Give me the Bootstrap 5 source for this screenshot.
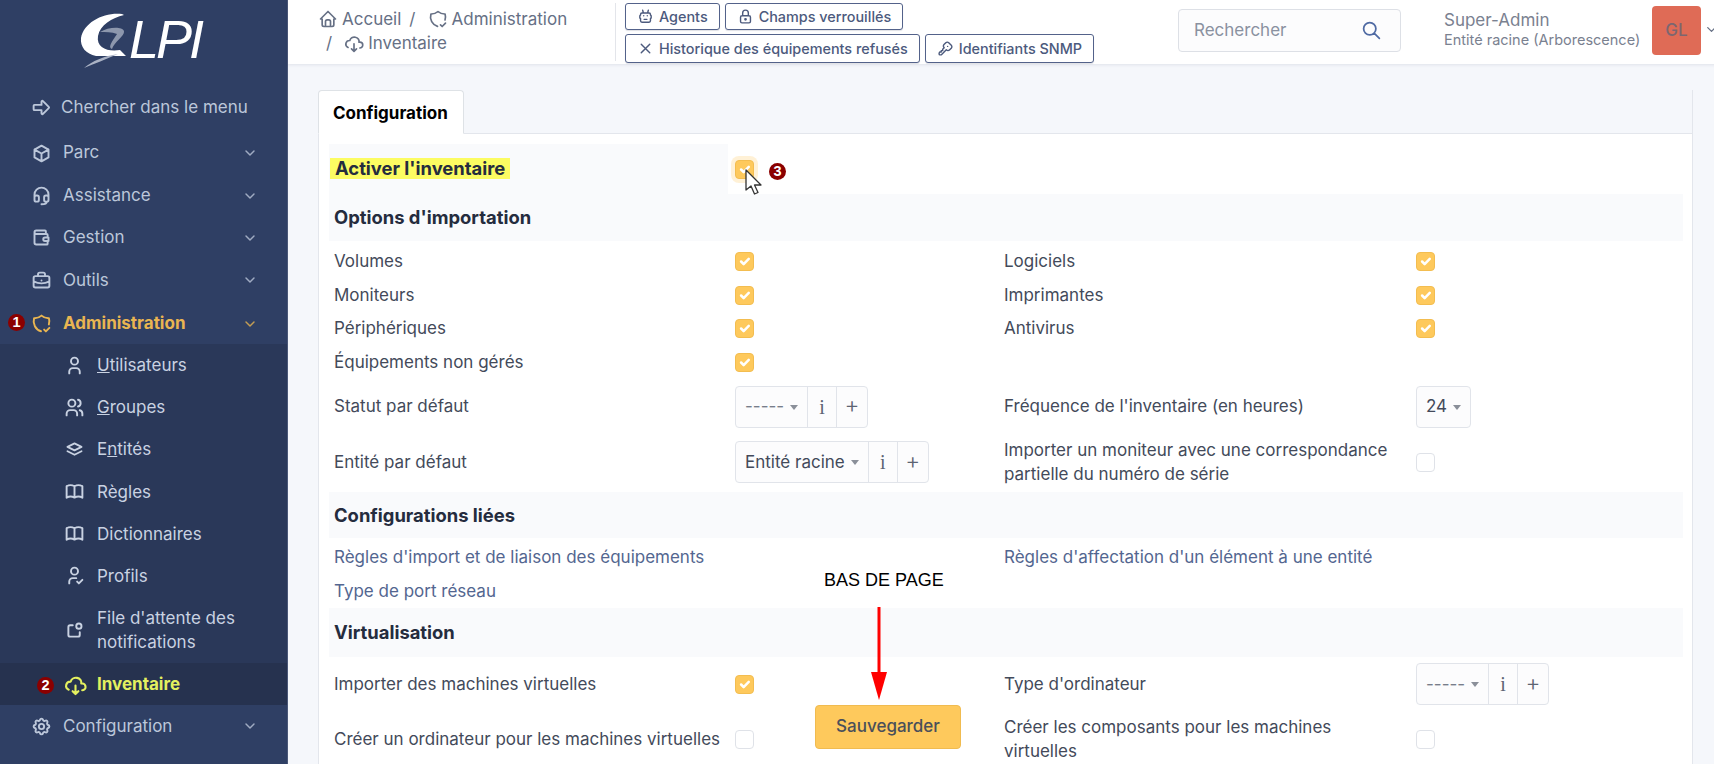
<!DOCTYPE html>
<html lang="fr">
<head>
    <meta charset="UTF-8">
    <title>Inventaire - GLPI</title>
    <link href="https://cdn.jsdelivr.net/npm/bootstrap@5.3.0/dist/css/bootstrap.min.css" rel="stylesheet">
    <style>
        html, body { height: 100%; overflow: hidden; }
        body { font-family: Inter, "Liberation Sans", sans-serif; font-size: 17px; color: #434a5a; background: #f5f7fb; }
        .app-root { position: relative; width: 1714px; height: 764px; overflow: hidden; }
        .ico { width: 1em; height: 1em; fill: none; stroke: currentColor; stroke-width: 2; stroke-linecap: round; stroke-linejoin: round; flex-shrink: 0; }

        /* sidebar */
        .side { width: 288px; background: #2f3f64; color: #bcc7da; border-right: 1px solid #4b5878; flex-shrink: 0; }
        .side .ico { stroke-width: 2.2; }
        .side-logo { height: 86px; color: #fff; padding-left: 80px; padding-top: 12px; }
        .logo-txt { font-family: "Liberation Sans", sans-serif; font-style: italic; font-size: 54px; line-height: 1; letter-spacing: -3px; margin-left: -1px; }
        .side-search { height: 43px; padding-left: 31px; gap: 9px; margin-bottom: 3px; }
        .side-search .ico { font-size: 21px; }
        .side-item { height: 42.4px; padding-left: 31px; padding-right: 29px; gap: 11px; }
        .side-item > .ico:first-child { font-size: 21px; }
        .side-item .chev { font-size: 16px; margin-left: auto; opacity: .8; }
        .side-item.is-open { color: #e9b551; font-weight: 700; padding-top: 2px; }
        .side-sub { background: #2a3859; color: #c9d2e2; }
        .sub-item { min-height: 42.2px; padding-left: 64px; padding-right: 40px; gap: 12px; line-height: 24px; }
        .sub-item .ico { font-size: 21px; }
        .sub-item.is-file { padding-top: 9px; padding-bottom: 9px; }
        .sub-item.is-current { background: #26324f; color: #e4f05f; font-weight: 700; }
        .sub-item.is-current .ico { font-size: 23px; margin-right: -2px; }

        /* top bar */
        .topbar { height: 64px; background: #fff; box-shadow: 0 1px 3px rgba(40, 50, 80, .1); padding-left: 30px; color: #667085; }
        .crumb { width: 280px; padding-top: 7px; flex-shrink: 0; }
        .crumb .breadcrumb { margin: 0; line-height: 24px; font-size: 17px; }
        .crumb .breadcrumb-item { color: #667085; display: flex; align-items: center; gap: 4px; }
        .crumb .breadcrumb-item::before { color: #667085; }
        .crumb .ico { font-size: 20px; }
        .top-actions { width: 540px; margin-left: 17px; border-left: 1px solid #e3e5ea; height: 58px; margin-top: 3px; padding-left: 9px; flex-shrink: 0; gap: 2px 5px; align-content: flex-start; }
        .btn-act { --bs-btn-padding-y: 0; --bs-btn-padding-x: 11px; --bs-btn-font-size: 14.4px; --bs-btn-border-radius: 3px; --bs-btn-color: #4c5a7d; --bs-btn-border-color: #53628a; height: 27px; border-width: 1px; background: #fff; display: inline-flex; align-items: center; gap: 5px; font-weight: 500; box-shadow: 0 1px 1px rgba(40, 50, 80, .15); }
        .btn-act .ico { font-size: 17px; }
        .btn-act.tall { height: 29px; }
        .top-search { width: 223px; height: 43px; margin-left: 23px; margin-top: 9px; border: 1px solid #dde0e6; border-radius: 4px; background: #fcfcfd; padding: 0 18px 0 15px; color: #8a91a0; flex-shrink: 0; }
        .top-search .ico { color: #4f6aa3; font-size: 21px; margin-left: auto; }
        .top-user { margin-left: 43px; line-height: 1.2; color: #7a8190; padding-top: 10px; width: 208px; flex-shrink: 0; white-space: nowrap; }
        .top-user small { font-size: 14.5px; display: block; margin-top: 1px; }
        .avatar-gl { width: 49px; height: 49px; border-radius: 4px; background: #df6b56; color: #7c6670; font-weight: 500; margin-top: 6px; flex-shrink: 0; }
        .top-chev { font-size: 15px; margin-top: 22px; margin-left: 3px; flex-shrink: 0; }

        /* content */
        .page-body { padding: 26px 26px 0 30px; }
        .tab-strip { border-right: 1px solid #e3e6ec; --bs-nav-tabs-border-color: #e3e6ec; height: 44px; }
        .tab-strip .nav-link { height: 44px; padding: 0 14px; line-height: 44px; width: 146px; color: #252c3e; font-weight: 700; font-size: 17px; border-radius: 4px 4px 0 0; background: #fff; border-color: #e9ecf1 #e9ecf1 #fff; }
        .form-box { background: #fff; border: 1px solid #e3e6ec; border-top: 0; padding: 10px 9px 0 10px; border-radius: 0; height: 640px; }
        .cfg-row { display: grid; grid-template-columns: 399px 269px 412px 270px; align-items: center; }
        .cfg-row > div { padding-left: 7px; }
        .cfg-row > div:nth-child(4n+1) { padding-left: 5px; }
        .row-s { height: 33.6px; }
        .row-m { height: 55.4px; }
        .row-l { height: 50px; }
        .row-xl { height: 60px; }
        .row-first { height: 50px; }
        .row-first > div:first-child { background: #f9fafc; height: 50px; padding-bottom: 2px; display: flex; align-items: center; }
        .band { background: #f9fafc; height: 47px; padding-left: 5px; padding-top: 1px; font-weight: 700; font-size: 18.4px; color: #252c3e; display: flex; align-items: center; }
        .band.gap-b { margin-bottom: 4px; }
        .band.gap-a { margin-top: 2px; margin-bottom: 3px; height: 46px; }
        .band.band-lg { height: 49px; margin-bottom: 2px; padding-top: 0; }
        .hl-yellow { background: #fcfc62; font-weight: 700; font-size: 18.4px; color: #252c3e; padding: 0 5px; margin-left: -4px; line-height: 21px; }
        .cfg-link { color: #536690; text-decoration: none; }
        .lbl-wrap { line-height: 24px; }
        .form-check-input.chk { width: 19px; height: 19px; margin: 0; border-radius: 4px; border-color: #dfe2e8; display: block; }
        .form-check-input.chk:checked { background-color: #fec95c; border-color: #f3bd50; }
        .chk.chk-focus { box-shadow: 0 0 0 4px rgba(254, 201, 92, .25); }
        .sel-grp { height: 42px; border: 1px solid #e1e4ea; border-radius: 4px; background: #fcfcfd; }
        .sel-grp > span { padding: 0 9px; border-right: 1px solid #e1e4ea; }
        .sel-grp > span:last-child { border-right: 0; }
        .sel-val { gap: 6px; }
        .sel-val::after { content: ""; border: 4px solid transparent; border-top: 5px solid #8a8f99; border-bottom: 0; }
        .sel-dash { color: #777d8a; }
        .sel-info { font-family: "Liberation Serif", serif; font-size: 20px; width: 29px; justify-content: center; color: #5d6473; padding: 0 !important; }
        .sel-plus { font-size: 23px; font-weight: 300; width: 30px; justify-content: center; color: #5d6473; padding: 0 0 3px !important; }

        /* overlays */
        .mark-num { position: absolute; width: 17px; height: 17px; border-radius: 50%; background: #8b0000; color: #fff; font-size: 14.5px; line-height: 17px; font-family: "Liberation Sans", sans-serif; font-weight: 700; text-align: center; }
        .btn-save { position: absolute; left: 815px; top: 705px; width: 146px; height: 44px; --bs-btn-bg: #fec95c; --bs-btn-border-color: #f0bb50; --bs-btn-color: #4a4f5a; --bs-btn-font-size: 17px; --bs-btn-border-radius: 4px; font-weight: 500; }
        .note-txt { position: absolute; left: 824px; top: 570px; font-family: "Liberation Sans", sans-serif; font-size: 18px; color: #000; line-height: 20px; }
        .note-arrow { position: absolute; left: 870px; top: 607px; width: 18px; height: 93px; }
        .cursor-ptr { position: absolute; left: 744px; top: 169px; width: 18px; height: 27px; }
    </style>
</head>
<body>
<svg width="0" height="0" class="d-none">
    <symbol id="i-arrow" viewBox="0 0 24 24"><path d="M4 9h8v-3.586a1 1 0 0 1 1.707 -.707l6.586 6.586a1 1 0 0 1 0 1.414l-6.586 6.586a1 1 0 0 1 -1.707 -.707v-3.586h-8a1 1 0 0 1 -1 -1v-4a1 1 0 0 1 1 -1z"/></symbol>
    <symbol id="i-box" viewBox="0 0 24 24"><path d="M12 3l8 4.500v9l-8 4.500l-8 -4.500v-9z M12 12l8 -4.500 M12 12v9 M12 12l-8 -4.500"/></symbol>
    <symbol id="i-headset" viewBox="0 0 24 24"><path d="M4 14v-3a8 8 0 1 1 16 0v3 M18 19c0 1.657 -2.686 3 -6 3 M4 14a2 2 0 0 1 2 -2h1a2 2 0 0 1 2 2v3a2 2 0 0 1 -2 2h-1a2 2 0 0 1 -2 -2v-3z M15 14a2 2 0 0 1 2 -2h1a2 2 0 0 1 2 2v3a2 2 0 0 1 -2 2h-1a2 2 0 0 1 -2 -2v-3z"/></symbol>
    <symbol id="i-wallet" viewBox="0 0 24 24"><path d="M17 8v-3a1 1 0 0 0 -1 -1h-10a2 2 0 0 0 0 4h12a1 1 0 0 1 1 1v3m0 4v3a1 1 0 0 1 -1 1h-12a2 2 0 0 1 -2 -2v-12 M20 12v4h-4a2 2 0 0 1 0 -4h4"/></symbol>
    <symbol id="i-case" viewBox="0 0 24 24"><path d="M3 9a2 2 0 0 1 2 -2h14a2 2 0 0 1 2 2v9a2 2 0 0 1 -2 2h-14a2 2 0 0 1 -2 -2z M8 7v-2a2 2 0 0 1 2 -2h4a2 2 0 0 1 2 2v2 M12 12v.01 M3 13a20 20 0 0 0 18 0"/></symbol>
    <symbol id="i-shield" viewBox="0 0 24 24"><path d="M11.46 20.846a12 12 0 0 1 -7.96 -14.846a12 12 0 0 0 8.500 -3a12 12 0 0 0 8.500 3a12 12 0 0 1 -.09 7.06 M15 19l2 2l4 -4"/></symbol>
    <symbol id="i-user" viewBox="0 0 24 24"><path d="M8 7a4 4 0 1 0 8 0a4 4 0 0 0 -8 0 M6 21v-2a4 4 0 0 1 4 -4h4a4 4 0 0 1 4 4v2"/></symbol>
    <symbol id="i-users" viewBox="0 0 24 24"><path d="M5 7a4 4 0 1 0 8 0a4 4 0 1 0 -8 0 M3 21v-2a4 4 0 0 1 4 -4h4a4 4 0 0 1 4 4v2 M16 3.13a4 4 0 0 1 0 7.75 M21 21v-2a4 4 0 0 0 -3 -3.85"/></symbol>
    <symbol id="i-stack" viewBox="0 0 24 24"><path d="M12 5l-8 4l8 4l8 -4z M4 14l8 4l8 -4"/></symbol>
    <symbol id="i-book" viewBox="0 0 24 24"><path d="M3 19a9 9 0 0 1 9 0a9 9 0 0 1 9 0 M3 6a9 9 0 0 1 9 0a9 9 0 0 1 9 0 M3 6v13 M12 6v13 M21 6v13"/></symbol>
    <symbol id="i-ucheck" viewBox="0 0 24 24"><path d="M8 7a4 4 0 1 0 8 0a4 4 0 0 0 -8 0 M6 21v-2a4 4 0 0 1 4 -4h4 M15 19l2 2l4 -4"/></symbol>
    <symbol id="i-notif" viewBox="0 0 24 24"><path d="M10 6h-3a2 2 0 0 0 -2 2v9a2 2 0 0 0 2 2h9a2 2 0 0 0 2 -2v-3 M14 7a3 3 0 1 0 6 0a3 3 0 1 0 -6 0"/></symbol>
    <symbol id="i-cloud" viewBox="0 0 24 24"><path d="M19 18a3.500 3.500 0 0 0 0 -7h-1a5 4.500 0 0 0 -11 -2a4.600 4.400 0 0 0 -2.100 8.400 M12 13v9 M9 19l3 3l3 -3"/></symbol>
    <symbol id="i-gear" viewBox="0 0 24 24"><path d="M10.325 4.317c.426 -1.756 2.924 -1.756 3.35 0a1.724 1.724 0 0 0 2.573 1.066c1.543 -.94 3.31 .826 2.37 2.37a1.724 1.724 0 0 0 1.065 2.572c1.756 .426 1.756 2.924 0 3.35a1.724 1.724 0 0 0 -1.066 2.573c.94 1.543 -.826 3.31 -2.37 2.37a1.724 1.724 0 0 0 -2.572 1.065c-.426 1.756 -2.924 1.756 -3.35 0a1.724 1.724 0 0 0 -2.573 -1.066c-1.543 .94 -3.31 -.826 -2.37 -2.37a1.724 1.724 0 0 0 -1.065 -2.572c-1.756 -.426 -1.756 -2.924 0 -3.35a1.724 1.724 0 0 0 1.066 -2.573c-.94 -1.543 .826 -3.31 2.37 -2.37c1 .608 2.296 .07 2.572 -1.065z M9 12a3 3 0 1 0 6 0a3 3 0 0 0 -6 0"/></symbol>
    <symbol id="i-chev" viewBox="0 0 24 24"><path d="M6 9l6 6l6 -6"/></symbol>
    <symbol id="i-home" viewBox="0 0 24 24"><path d="M5 12h-2l9 -9l9 9h-2 M5 12v7a2 2 0 0 0 2 2h10a2 2 0 0 0 2 -2v-7 M9 21v-6a2 2 0 0 1 2 -2h2a2 2 0 0 1 2 2v6"/></symbol>
    <symbol id="i-robot" viewBox="0 0 24 24"><path d="M7 7h10a2 2 0 0 1 2 2v1l1 1v3l-1 1v3a2 2 0 0 1 -2 2h-10a2 2 0 0 1 -2 -2v-3l-1 -1v-3l1 -1v-1a2 2 0 0 1 2 -2z M10 16h4 M9.500 11v.01 M14.500 11v.01 M9 7l-1 -4 M15 7l1 -4"/></symbol>
    <symbol id="i-lock" viewBox="0 0 24 24"><path d="M5 13a2 2 0 0 1 2 -2h10a2 2 0 0 1 2 2v6a2 2 0 0 1 -2 2h-10a2 2 0 0 1 -2 -2z M11 16a1 1 0 1 0 2 0a1 1 0 0 0 -2 0 M8 11v-4a4 4 0 1 1 8 0v4"/></symbol>
    <symbol id="i-x" viewBox="0 0 24 24"><path d="M18 6l-12 12 M6 6l12 12"/></symbol>
    <symbol id="i-key" viewBox="0 0 24 24"><path d="M16.555 3.843l3.602 3.602a2.877 2.877 0 0 1 0 4.069l-2.643 2.643a2.877 2.877 0 0 1 -4.069 0l-.301 -.301l-6.558 6.558a2 2 0 0 1 -1.239 .578l-.175 .008h-1.172a1 1 0 0 1 -.993 -.883l-.007 -.117v-1.172a2 2 0 0 1 .467 -1.284l.119 -.13l.414 -.414h2v-2h2v-2l2.144 -2.144l-.301 -.301a2.877 2.877 0 0 1 0 -4.069l2.643 -2.643a2.877 2.877 0 0 1 4.069 0z M15 9h.01"/></symbol>
    <symbol id="i-search" viewBox="0 0 24 24"><path d="M3 10a7 7 0 1 0 14 0a7 7 0 1 0 -14 0 M21 21l-6 -6"/></symbol>
</svg>

<div class="app-root d-flex">
    <aside class="side">
        <div class="side-logo d-flex align-items-start">
            <svg width="50" height="56" viewBox="0 0 50 56">
                <path fill="#fff" d="M42 2C24 0 4 10 1 26C0 35 6 42 16 44L46 44L40 38C28 40 16 36 18 24C20 13 32 6 44 3z"/>
                <path fill="#8d97ad" d="M20 20C28 15 42 14 44 19C45 24 34 30 32 37C27 35 34 27 37 22C32 20 25 20 20 20z"/>
                <path fill="#aab2c4" d="M4 56C12 49 24 44 38 42C26 47 14 52 4 56z"/>
            </svg>
            <span class="logo-txt">LPI</span>
        </div>
        <div class="side-search d-flex align-items-center"><svg class="ico"><use href="#i-arrow"/></svg>Chercher dans le menu</div>
        <div class="side-item d-flex align-items-center"><svg class="ico"><use href="#i-box"/></svg>Parc<svg class="ico chev"><use href="#i-chev"/></svg></div>
        <div class="side-item d-flex align-items-center"><svg class="ico"><use href="#i-headset"/></svg>Assistance<svg class="ico chev"><use href="#i-chev"/></svg></div>
        <div class="side-item d-flex align-items-center"><svg class="ico"><use href="#i-wallet"/></svg>Gestion<svg class="ico chev"><use href="#i-chev"/></svg></div>
        <div class="side-item d-flex align-items-center"><svg class="ico"><use href="#i-case"/></svg>Outils<svg class="ico chev"><use href="#i-chev"/></svg></div>
        <div class="side-item is-open d-flex align-items-center"><svg class="ico"><use href="#i-shield"/></svg>Administration<svg class="ico chev"><use href="#i-chev"/></svg></div>
        <div class="side-sub">
            <div class="sub-item d-flex align-items-center"><svg class="ico"><use href="#i-user"/></svg><span><u>U</u>tilisateurs</span></div>
            <div class="sub-item d-flex align-items-center"><svg class="ico"><use href="#i-users"/></svg><span><u>G</u>roupes</span></div>
            <div class="sub-item d-flex align-items-center"><svg class="ico"><use href="#i-stack"/></svg><span>E<u>n</u>tités</span></div>
            <div class="sub-item d-flex align-items-center"><svg class="ico"><use href="#i-book"/></svg><span>Règles</span></div>
            <div class="sub-item d-flex align-items-center"><svg class="ico"><use href="#i-book"/></svg><span>Dictionnaires</span></div>
            <div class="sub-item d-flex align-items-center"><svg class="ico"><use href="#i-ucheck"/></svg><span>Profils</span></div>
            <div class="sub-item is-file d-flex align-items-center"><svg class="ico"><use href="#i-notif"/></svg><span>File d'attente des notifications</span></div>
            <div class="sub-item is-current d-flex align-items-center"><svg class="ico"><use href="#i-cloud"/></svg><span>Inventaire</span></div>
        </div>
        <div class="side-item d-flex align-items-center"><svg class="ico"><use href="#i-gear"/></svg>Configuration<svg class="ico chev"><use href="#i-chev"/></svg></div>
    </aside>

    <main class="flex-grow-1">
        <header class="topbar d-flex">
            <nav class="crumb">
                <ol class="breadcrumb">
                    <li class="breadcrumb-item"><svg class="ico"><use href="#i-home"/></svg>Accueil</li>
                    <li class="breadcrumb-item"><svg class="ico"><use href="#i-shield"/></svg>Administration</li>
                    <li class="breadcrumb-item"><svg class="ico"><use href="#i-cloud"/></svg>Inventaire</li>
                </ol>
            </nav>
            <div class="top-actions d-flex flex-wrap">
                <button class="btn btn-act"><svg class="ico"><use href="#i-robot"/></svg>Agents</button>
                <button class="btn btn-act"><svg class="ico"><use href="#i-lock"/></svg>Champs verrouillés</button>
                <div class="w-100"></div>
                <button class="btn btn-act tall"><svg class="ico"><use href="#i-x"/></svg>Historique des équipements refusés</button>
                <button class="btn btn-act tall"><svg class="ico"><use href="#i-key"/></svg>Identifiants SNMP</button>
            </div>
            <div class="top-search d-flex align-items-center">Rechercher<svg class="ico"><use href="#i-search"/></svg></div>
            <div class="top-user">Super-Admin<small>Entité racine (Arborescence)</small></div>
            <div class="avatar-gl d-flex align-items-center justify-content-center">GL</div>
            <svg class="ico top-chev"><use href="#i-chev"/></svg>
        </header>

        <div class="page-body">
            <ul class="nav nav-tabs tab-strip">
                <li class="nav-item"><a class="nav-link active" href="#">Configuration</a></li>
            </ul>
            <div class="form-box">
                <div class="cfg-row row-first">
                    <div><span class="hl-yellow">Activer l'inventaire</span></div>
                    <div><input class="form-check-input chk chk-focus" type="checkbox" checked></div>
                </div>
                <div class="band gap-b">Options d'importation</div>
                <div class="cfg-row row-s">
                    <div>Volumes</div><div><input class="form-check-input chk" type="checkbox" checked></div>
                    <div>Logiciels</div><div><input class="form-check-input chk" type="checkbox" checked></div>
                </div>
                <div class="cfg-row row-s">
                    <div>Moniteurs</div><div><input class="form-check-input chk" type="checkbox" checked></div>
                    <div>Imprimantes</div><div><input class="form-check-input chk" type="checkbox" checked></div>
                </div>
                <div class="cfg-row row-s">
                    <div>Périphériques</div><div><input class="form-check-input chk" type="checkbox" checked></div>
                    <div>Antivirus</div><div><input class="form-check-input chk" type="checkbox" checked></div>
                </div>
                <div class="cfg-row row-s">
                    <div>Équipements non gérés</div><div><input class="form-check-input chk" type="checkbox" checked></div>
                    <div></div><div></div>
                </div>
                <div class="cfg-row row-m">
                    <div>Statut par défaut</div>
                    <div><div class="sel-grp d-inline-flex">
                        <span class="sel-val sel-dash d-flex align-items-center">-----</span><span class="sel-info d-flex align-items-center">i</span><span class="sel-plus d-flex align-items-center">+</span>
                    </div></div>
                    <div>Fréquence de l'inventaire (en heures)</div>
                    <div><div class="sel-grp d-inline-flex">
                        <span class="sel-val d-flex align-items-center">24</span>
                    </div></div>
                </div>
                <div class="cfg-row row-m">
                    <div>Entité par défaut</div>
                    <div><div class="sel-grp d-inline-flex">
                        <span class="sel-val d-flex align-items-center">Entité racine</span><span class="sel-info d-flex align-items-center">i</span><span class="sel-plus d-flex align-items-center">+</span>
                    </div></div>
                    <div class="lbl-wrap">Importer un moniteur avec une correspondance partielle du numéro de série</div>
                    <div><input class="form-check-input chk" type="checkbox"></div>
                </div>
                <div class="band gap-a">Configurations liées</div>
                <div class="cfg-row row-s">
                    <div class="text-nowrap"><a class="cfg-link" href="#">Règles d'import et de liaison des équipements</a></div><div></div>
                    <div class="text-nowrap"><a class="cfg-link" href="#">Règles d'affectation d'un élément à une entité</a></div><div></div>
                </div>
                <div class="cfg-row row-s">
                    <div><a class="cfg-link" href="#">Type de port réseau</a></div><div></div><div></div><div></div>
                </div>
                <div class="band band-lg">Virtualisation</div>
                <div class="cfg-row row-l">
                    <div>Importer des machines virtuelles</div><div><input class="form-check-input chk" type="checkbox" checked></div>
                    <div>Type d'ordinateur</div>
                    <div><div class="sel-grp d-inline-flex">
                        <span class="sel-val sel-dash d-flex align-items-center">-----</span><span class="sel-info d-flex align-items-center">i</span><span class="sel-plus d-flex align-items-center">+</span>
                    </div></div>
                </div>
                <div class="cfg-row row-xl">
                    <div class="text-nowrap">Créer un ordinateur pour les machines virtuelles</div><div><input class="form-check-input chk" type="checkbox"></div>
                    <div class="lbl-wrap">Créer les composants pour les machines virtuelles</div><div><input class="form-check-input chk" type="checkbox"></div>
                </div>
            </div>
        </div>
    </main>

    <span class="mark-num" style="left:8px;top:314px">1</span>
    <span class="mark-num" style="left:37px;top:677px">2</span>
    <span class="mark-num" style="left:769px;top:163px">3</span>
    <button class="btn btn-save">Sauvegarder</button>
    <span class="note-txt">BAS DE PAGE</span>
    <svg class="note-arrow" viewBox="0 0 18 93">
        <path d="M9 0V70" stroke="#f00" stroke-width="3" fill="none"/>
        <path d="M1 65H17L9 93z" fill="#f00"/>
    </svg>
    <svg class="cursor-ptr" viewBox="0 0 18 27">
        <path d="M2 1V21L7 17L10.500 25L14 23.500L10.500 16H17z" fill="#fff" stroke="#333" stroke-width="1.300" stroke-linejoin="round"/>
    </svg>
</div>
<script src="https://cdn.jsdelivr.net/npm/bootstrap@5.3.0/dist/js/bootstrap.bundle.min.js"></script>
</body>
</html>
